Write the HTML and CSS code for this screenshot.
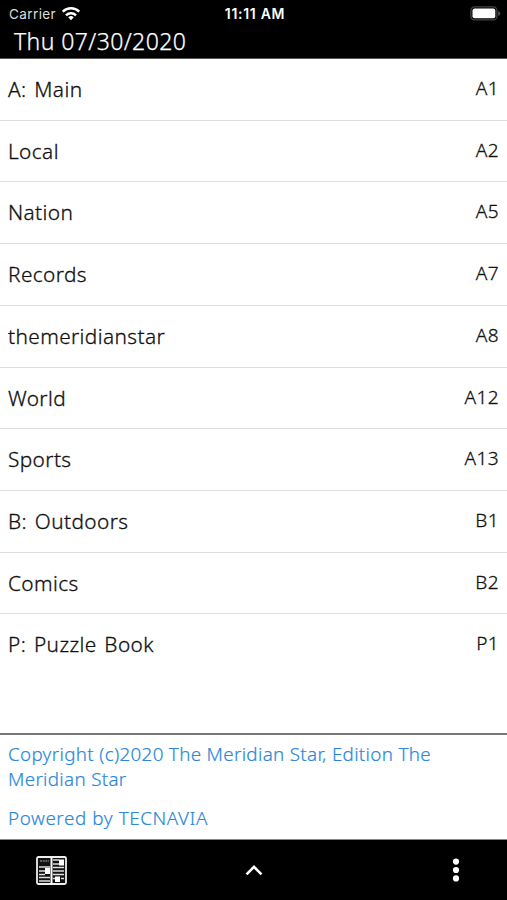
FILE: index.html
```html
<!DOCTYPE html>
<html lang="en">
  <head>
    <title>The Meridian Star</title>
    <meta charset="utf-8" />
    <link rel="stylesheet" href="styles.css">
  </head>
  <body>
    <header>
      <div class="status">
        <div class="carrier">
          <span>Carrier</span>
          <svg width="18" height="14" viewBox="0 0 18 14" fill="none" stroke="#fff" stroke-width="2.5">
            <path d="M.8 4.700a11.500 11.500 0 0 1 16.400 0" />
            <path d="M4 8.300a7.200 7.200 0 0 1 10 0" />
            <path d="M9 13.300l-2.800-3a4 4 0 0 1 5.600 0z" fill="#fff" stroke="none" />
          </svg>
        </div>
        <div class="time">11:11 AM</div>
        <svg class="battery" width="31" height="15" viewBox="0 0 31 15">
          <rect x="0.9" y="0.9" width="26" height="13" rx="3.6" fill="none" stroke="#444" stroke-width="1.3" />
          <rect x="2.5" y="2.5" width="22.8" height="9.8" rx="2" fill="#fff" />
          <path d="M28.200 5v5q2-.8 2-2.500t-2-2.500z" fill="#555" />
        </svg>
      </div>
      <h1>Thu 07/30/2020</h1>
    </header>
    <ul class="sections">
      <li><span>A: Main</span><span class="page">A1</span></li>
      <li><span>Local</span><span class="page">A2</span></li>
      <li><span>Nation</span><span class="page">A5</span></li>
      <li><span>Records</span><span class="page">A7</span></li>
      <li><span>themeridianstar</span><span class="page">A8</span></li>
      <li><span>World</span><span class="page">A12</span></li>
      <li><span>Sports</span><span class="page">A13</span></li>
      <li><span>B: Outdoors</span><span class="page">B1</span></li>
      <li><span>Comics</span><span class="page">B2</span></li>
      <li><span>P: Puzzle Book</span><span class="page">P1</span></li>
    </ul>
    <div class="copyright">
      <p>Copyright (c)2020 The Meridian Star, Edition The<br>Meridian Star</p>
      <p class="powered">Powered by TECNAVIA</p>
    </div>
    <footer>
      <svg width="31" height="29" viewBox="0 0 31 29">
        <rect x="1" y="1" width="29" height="27" rx="1.5" fill="#111" stroke="#eee" stroke-width="1.8" />
        <path d="M15.500 1v27" stroke="#fff" stroke-width="2" />
        <path d="M4 5h9" stroke="#777" stroke-width="1.5" stroke-dasharray="2 .7" />
        <path d="M3 11h11M3 15h6M3 18.500h6M3 21.500h11M3 25h11M17 4h6M17 8h6M17 11.500h11M17 15h11M17 18.500h11M17 22.500h2M25 22.500h3" stroke="#ddd" stroke-width="1.5" />
        <path d="M9 12h5v6h-5zM23 3.500h5v6h-5zM19 20.500h5v5.500h-5z" fill="#fff" />
      </svg>
      <svg width="18" height="12" viewBox="0 0 18 12" fill="none" stroke="#fff" stroke-width="2.6">
        <path d="M1.500 10.300L9 2.800l7.500 7.500" />
      </svg>
      <svg class="more" width="8" height="24" viewBox="0 0 8 24" fill="#fff">
        <circle cx="4" cy="3.600" r="3.100" />
        <circle cx="4" cy="12" r="3.100" />
        <circle cx="4" cy="20.400" r="3.100" />
      </svg>
    </footer>
  </body>
</html>
```
FILE: styles.css
```css
body {
  margin: 0;
  height: 900px;
  display: flex;
  flex-direction: column;
  overflow: hidden;
  background: #fff;
  color: #111;
  font-family: "Noto Sans", sans-serif;
  font-weight: 300;
}
header {
  height: 59px;
  box-sizing: border-box;
  background: #000;
  color: #fff;
  border-bottom: 1px solid #555;
}
.status {
  height: 27px;
  display: grid;
  grid-template-columns: 1fr auto 1fr;
  align-items: center;
  padding: 0 6px 0 9px;
  font: 13.5px Inter, sans-serif;
}
.carrier {
  display: flex;
  align-items: center;
  gap: 6px;
  color: #ddd;
  letter-spacing: 0.4px;
}
.time {
  font-weight: 600;
  font-size: 14px;
  letter-spacing: 0.7px;
}
.battery {
  justify-self: end;
}
h1 {
  margin: 0;
  padding-left: 14px;
  font-size: 23px;
  font-weight: 300;
  line-height: 29px;
  letter-spacing: 0.4px;
  -webkit-text-stroke: 0.25px;
}
.sections {
  flex: 1;
  margin: 0;
  padding: 0;
  list-style: none;
}
.sections li {
  display: flex;
  justify-content: space-between;
  height: 61.73px;
  box-sizing: border-box;
  padding: 0 8px;
  border-bottom: 1px solid #ddd;
  font-size: 20.8px;
  line-height: 61px;
  letter-spacing: 0.4px;
  word-spacing: 2px;
  -webkit-text-stroke: 0.3px;
}
.sections li:last-child {
  border-bottom: none;
}
.page {
  font-size: 19px;
  line-height: 58px;
}
.copyright {
  height: 107px;
  box-sizing: border-box;
  padding: 7px 8px 0;
  border-top: 2px solid #777;
  border-bottom: 1px solid #888;
  color: #2b88d9;
  font-size: 18.8px;
  line-height: 25px;
  letter-spacing: 0.32px;
  -webkit-text-stroke: 0.2px;
}
.copyright p {
  margin: 0 0 14px;
  white-space: nowrap;
}
.copyright .powered {
  letter-spacing: 0.6px;
}
footer {
  height: 60px;
  display: grid;
  grid-template-columns: 1fr auto 1fr;
  align-items: center;
  padding: 0 36px;
  background: #000;
}
.more {
  justify-self: end;
  margin-right: 11px;
}
```
